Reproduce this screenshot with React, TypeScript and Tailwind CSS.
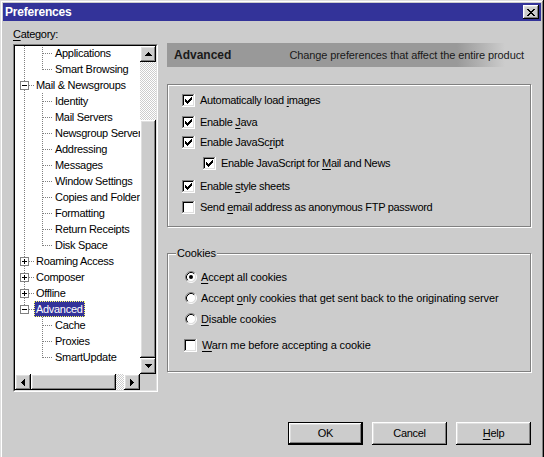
import React from "react";

type R = [number, number, number, number];

function Px({ w, h, rects, color = "#000" }: { w: number; h: number; rects: R[]; color?: string }) {
  return (
    <svg width={w} height={h} viewBox={`0 0 ${w} ${h}`} shapeRendering="crispEdges" className="block">
      {rects.map((r, i) => (
        <rect key={i} x={r[0]} y={r[1]} width={r[2]} height={r[3]} fill={color} />
      ))}
    </svg>
  );
}

const X_RECTS: R[] = [
  [0, 0, 2, 1], [6, 0, 2, 1], [1, 1, 2, 1], [5, 1, 2, 1], [2, 2, 4, 1], [3, 3, 2, 1],
  [2, 4, 4, 1], [1, 5, 2, 1], [5, 5, 2, 1], [0, 6, 2, 1], [6, 6, 2, 1],
];
const UP: R[] = [[3, 0, 1, 1], [2, 1, 3, 1], [1, 2, 5, 1], [0, 3, 7, 1]];
const DOWN: R[] = [[0, 0, 7, 1], [1, 1, 5, 1], [2, 2, 3, 1], [3, 3, 1, 1]];
const LEFT: R[] = [[0, 3, 1, 1], [1, 2, 1, 3], [2, 1, 1, 5], [3, 0, 1, 7]];
const RIGHT: R[] = [[0, 0, 1, 7], [1, 1, 1, 5], [2, 2, 1, 3], [3, 3, 1, 1]];
const CHECK: R[] = [
  [0, 2, 1, 3], [1, 3, 1, 3], [2, 4, 1, 3], [3, 3, 1, 3], [4, 2, 1, 3], [5, 1, 1, 3], [6, 0, 1, 3],
];

const raised =
  "bg-[#cccccc] shadow-[inset_-1px_-1px_#000,inset_1px_1px_#fff,inset_-2px_-2px_#808080,inset_2px_2px_#dfdfdf]";
const dither =
  "bg-[image:repeating-conic-gradient(#ffffff_0_25%,#cccccc_0_50%)] bg-[length:2px_2px]";

function U({ children }: { children: React.ReactNode }) {
  return <span className="underline underline-offset-[2px] decoration-1">{children}</span>;
}

function CheckBox({ checked }: { checked: boolean }) {
  return (
    <div className="w-[13px] h-[13px] shrink-0 bg-white shadow-[inset_-1px_-1px_#fff,inset_1px_1px_#808080,inset_-2px_-2px_#dfdfdf,inset_2px_2px_#000] flex items-center justify-center">
      {checked && <Px w={7} h={7} rects={CHECK} />}
    </div>
  );
}

function Radio({ checked }: { checked: boolean }) {
  return (
    <svg width={12} height={12} viewBox="0 0 12 12" className="block shrink-0">
      <circle cx={6} cy={6} r={4.5} fill="#fff" />
      <path d="M2.11 9.89 A5.5 5.5 0 0 1 9.89 2.11" stroke="#808080" fill="none" />
      <path d="M9.89 2.11 A5.5 5.5 0 0 1 2.11 9.89" stroke="#fff" fill="none" />
      <path d="M2.82 9.18 A4.5 4.5 0 0 1 9.18 2.82" stroke="#000" fill="none" />
      <path d="M9.18 2.82 A4.5 4.5 0 0 1 2.82 9.18" stroke="#dfdfdf" fill="none" />
      {checked && <circle cx={6} cy={6} r={2} fill="#000" />}
    </svg>
  );
}

function CheckRow({ checked, children, className = "" }: { checked: boolean; children: React.ReactNode; className?: string }) {
  return (
    <div className={`flex items-center h-[20px] ${className}`}>
      <CheckBox checked={checked} />
      <span className="ml-[5px] whitespace-nowrap">{children}</span>
    </div>
  );
}

function RadioRow({ checked, children, className = "" }: { checked: boolean; children: React.ReactNode; className?: string }) {
  return (
    <div className={`flex items-center h-[20px] ${className}`}>
      <Radio checked={checked} />
      <span className="ml-[4px] whitespace-nowrap">{children}</span>
    </div>
  );
}

type Node = { label: string; level: 0 | 1; exp?: "plus" | "minus"; sel?: boolean };

const NODES: Node[] = [
  { label: "Applications", level: 1 },
  { label: "Smart Browsing", level: 1 },
  { label: "Mail & Newsgroups", level: 0, exp: "minus" },
  { label: "Identity", level: 1 },
  { label: "Mail Servers", level: 1 },
  { label: "Newsgroup Servers", level: 1 },
  { label: "Addressing", level: 1 },
  { label: "Messages", level: 1 },
  { label: "Window Settings", level: 1 },
  { label: "Copies and Folders", level: 1 },
  { label: "Formatting", level: 1 },
  { label: "Return Receipts", level: 1 },
  { label: "Disk Space", level: 1 },
  { label: "Roaming Access", level: 0, exp: "plus" },
  { label: "Composer", level: 0, exp: "plus" },
  { label: "Offline", level: 0, exp: "plus" },
  { label: "Advanced", level: 0, exp: "minus", sel: true },
  { label: "Cache", level: 1 },
  { label: "Proxies", level: 1 },
  { label: "SmartUpdate", level: 1 },
];

function TreeLines() {
  const c = (i: number) => 7 + 16 * i;
  const dot = { stroke: "#808080", strokeDasharray: "1 1", fill: "none" } as const;
  const l1Segments: [number, number][] = [
    [-1, c(1)],
    [c(2) + 8, c(12)],
    [c(16) + 8, c(19)],
  ];
  return (
    <svg width={125} height={330} className="absolute left-0 top-0" shapeRendering="crispEdges">
      <line x1={9.5} y1={0} x2={9.5} y2={c(16)} {...dot} />
      {l1Segments.map(([a, b], k) => (
        <line key={k} x1={27.5} y1={a} x2={27.5} y2={b + 1} {...dot} />
      ))}
      {NODES.map((n, i) =>
        n.level === 1 ? (
          <line key={i} x1={28} y1={c(i) + 0.5} x2={38} y2={c(i) + 0.5} {...dot} />
        ) : (
          <line key={i} x1={14} y1={c(i) + 0.5} x2={19} y2={c(i) + 0.5} {...dot} />
        )
      )}
      {NODES.map((n, i) =>
        n.exp ? (
          <g key={"b" + i}>
            <rect x={5.5} y={c(i) - 3.5} width={8} height={8} fill="#fff" stroke="#808080" />
            <rect x={7} y={c(i)} width={5} height={1} fill="#000" />
            {n.exp === "plus" && <rect x={9} y={c(i) - 2} width={1} height={5} fill="#000" />}
          </g>
        ) : null
      )}
    </svg>
  );
}

function Tree() {
  return (
    <div className="mt-[3px] w-[145px] h-[348px] border border-t-[#808080] border-l-[#808080] border-r-white border-b-white">
      <div className="h-full border border-t-black border-l-black border-r-[#dfdfdf] border-b-[#dfdfdf] bg-[#cccccc] grid grid-cols-[125px_16px] grid-rows-[328px_16px]">
        <div className="relative overflow-hidden bg-white">
          <TreeLines />
          <div className="relative -mt-[1px]">
            {NODES.map((n, i) => (
              <div
                key={i}
                className={`h-[16px] flex items-center whitespace-nowrap ${n.level === 0 ? (n.sel ? "pl-[19px]" : "pl-[21px]") : "pl-[40px]"}`}
              >
                {n.sel ? (
                  <span className="leading-[14px] px-[1px] border border-dotted border-[#ffff66] bg-[#333399] text-white">
                    {n.label}
                  </span>
                ) : (
                  <span className="leading-[16px]">{n.label}</span>
                )}
              </div>
            ))}
          </div>
        </div>
        <div className="flex flex-col">
          <div className={`h-[16px] ${raised} flex items-center justify-center`}>
            <Px w={7} h={4} rects={UP} />
          </div>
          <div className={`h-[58px] ${dither}`} />
          <div className={`flex-1 ${raised}`} />
          <div className={`h-[16px] ${raised} flex items-center justify-center`}>
            <Px w={7} h={4} rects={DOWN} />
          </div>
        </div>
        <div className="flex">
          <div className={`w-[16px] ${raised} flex items-center justify-center`}>
            <Px w={4} h={7} rects={LEFT} />
          </div>
          <div className={`w-[85px] ${raised}`} />
          <div className={`flex-1 ${dither}`} />
          <div className={`w-[16px] ${raised} flex items-center justify-center`}>
            <Px w={4} h={7} rects={RIGHT} />
          </div>
        </div>
        <div className="bg-[#cccccc]" />
      </div>
    </div>
  );
}

function Button({ children, isDefault }: { children: React.ReactNode; isDefault?: boolean }) {
  if (isDefault) {
    return (
      <div className="w-[75px] h-[23px] border border-black">
        <div className={`h-full ${raised} flex items-center justify-center`}>{children}</div>
      </div>
    );
  }
  return <div className={`w-[75px] h-[23px] ${raised} flex items-center justify-center`}>{children}</div>;
}

export default function App() {
  return (
    <div className="w-[544px] h-[457px] overflow-hidden bg-[#cccccc] font-['Liberation_Sans',Arial,sans-serif] text-[11px] text-black tracking-[-0.3px]">
      <div className="w-[544px] h-[470px] p-[3px] bg-[#cccccc] shadow-[inset_-1px_-1px_#000,inset_1px_1px_#dfdfdf,inset_-2px_-2px_#808080,inset_2px_2px_#fff]">
        {/* title bar */}
        <div className="h-[18px] bg-[#333399] flex items-center justify-between pl-[2px] pr-[2px]">
          <span className="text-white font-bold text-[12px] leading-[18px] tracking-[-0.2px]">Preferences</span>
          <div className={`w-[16px] h-[14px] ${raised} flex items-center justify-center`}>
            <Px w={8} h={7} rects={X_RECTS} />
          </div>
        </div>

        {/* body */}
        <div className="flex pl-[10px]">
          <div className="w-[145px]">
            <div className="mt-[6px] leading-[14px]">
              <U>C</U>ategory:
            </div>
            <Tree />
          </div>

          <div className="ml-[9px] w-[364px]">
            <div className="mt-[22px] h-[24px] bg-[image:linear-gradient(to_right,#999999_290px,#cccccc_338px)] flex items-center justify-between pl-[7px] pr-[7px]">
              <span className="font-bold text-[12px] tracking-[0px] text-[#1a1a1a]">Advanced</span>
              <span className="tracking-[-0.1px] text-[#1a1a1a]">Change preferences that affect the entire product</span>
            </div>

            <div className="mt-[17px] h-[143px] border border-[#808080] shadow-[inset_1px_1px_#fff,1px_1px_#fff] pl-[14px]">
              <CheckRow checked className="mt-[5px]">
                Automatically load <U>i</U>mages
              </CheckRow>
              <CheckRow checked className="mt-[2px]">
                Enable <U>J</U>ava
              </CheckRow>
              <CheckRow checked>
                Enable JavaSc<U>r</U>ipt
              </CheckRow>
              <CheckRow checked className="mt-[1px] ml-[21px]">
                Enable JavaScript for <U>M</U>ail and News
              </CheckRow>
              <CheckRow checked className="mt-[3px]">
                Enable <U>s</U>tyle sheets
              </CheckRow>
              <CheckRow checked={false} className="mt-[1px]">
                Send <U>e</U>mail address as anonymous FTP password
              </CheckRow>
            </div>

            <div className="relative mt-[26px] h-[119px] border border-[#808080] shadow-[inset_1px_1px_#fff,1px_1px_#fff] pl-[17px] tracking-[-0.12px]">
              <span className="absolute left-[8px] -top-[8px] bg-[#cccccc] px-[1px] leading-[14px]">Cookies</span>
              <RadioRow checked className="mt-[13px]">
                <U>A</U>ccept all cookies
              </RadioRow>
              <RadioRow checked={false} className="mt-[1px]">
                Accept <U>o</U>nly cookies that get sent back to the originating server
              </RadioRow>
              <RadioRow checked={false} className="mt-[1px]">
                <U>D</U>isable cookies
              </RadioRow>
              <div className="mt-[6px] -ml-[1px]">
                <CheckRow checked={false}>
                  <U>W</U>arn me before accepting a cookie
                </CheckRow>
              </div>
            </div>

            <div className="mt-[50px] flex justify-end gap-[9px]">
              <Button isDefault>OK</Button>
              <Button>Cancel</Button>
              <Button>
                <U>H</U>elp
              </Button>
            </div>
          </div>
        </div>
      </div>
    </div>
  );
}
